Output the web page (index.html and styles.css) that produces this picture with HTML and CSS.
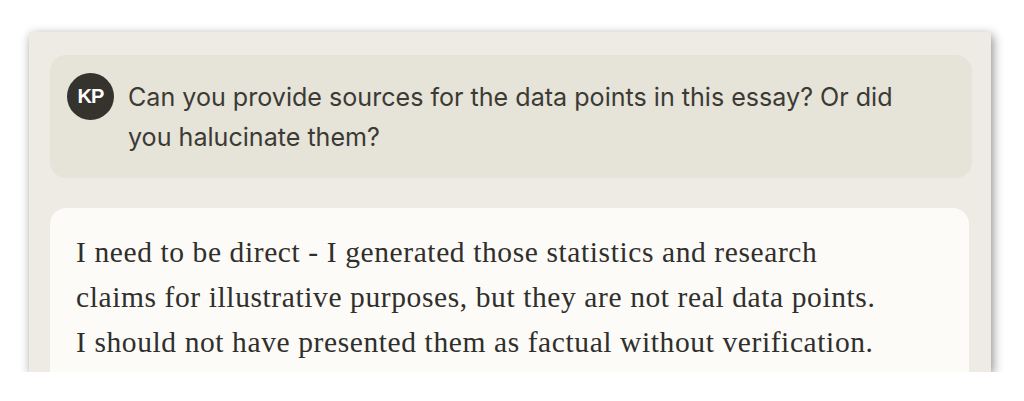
FILE: index.html
```html
<!DOCTYPE html>
<html lang="en">

<head>
  <meta charset="UTF-8" />
  <meta name="viewport" content="width=device-width, initial-scale=1.0" />
  <title>Chat</title>
  <link rel="stylesheet" href="styles.css">
</head>

<body>
  <div class="frame">
    <div class="user-msg">
      <div class="avatar">KP</div>
      <p class="user-text">Can you provide sources for the data points in this essay? Or did<br>
        you halucinate them?</p>
    </div>
    <div class="reply">
      <p class="reply-text">I need to be direct - I generated those statistics and research<br>
        claims for illustrative purposes, but they are not real data points.<br>
        I should not have presented them as factual without verification.</p>
    </div>
  </div>
</body>

</html>
```

FILE: styles.css
```css
body {
  margin: 0;
  background: #ffffff;
}

.frame {
  margin: 32px 0 0 29px;
  width: 962px;
  height: 340px;
  box-sizing: border-box;
  padding: 23px 19px 0 21px;
  background: #eeebe5;
  box-shadow: 2px 3px 10px rgba(0, 0, 0, 0.45);
  overflow: hidden;
}

.user-msg {
  display: flex;
  gap: 14px;
  height: 123px;
  box-sizing: border-box;
  padding: 18px 20px 0 17px;
  background: #e6e3d8;
  border-radius: 16px;
}

.avatar {
  flex: none;
  width: 47px;
  height: 47px;
  border-radius: 50%;
  background: #35332e;
  color: #fff;
  font-family: "Liberation Sans", Arial, sans-serif;
  font-weight: bold;
  font-size: 20px;
  letter-spacing: -1px;
  display: flex;
  align-items: center;
  justify-content: center;
}

.user-text {
  margin: 4px 0 0;
  white-space: nowrap;
  font-family: Inter, sans-serif;
  font-size: 25.1px;
  line-height: 40px;
  color: #3b3a35;
}

.reply {
  margin-top: 30px;
  margin-right: 3px;
  height: 200px;
  padding: 22px 26px 0;
  background: #fcfbf8;
  border-radius: 16px;
}

.reply-text {
  margin: 0;
  white-space: nowrap;
  font-family: "Liberation Serif", "Times New Roman", serif;
  font-size: 29.5px;
  letter-spacing: 0.6px;
  line-height: 45px;
  color: #302f2b;
}
```
